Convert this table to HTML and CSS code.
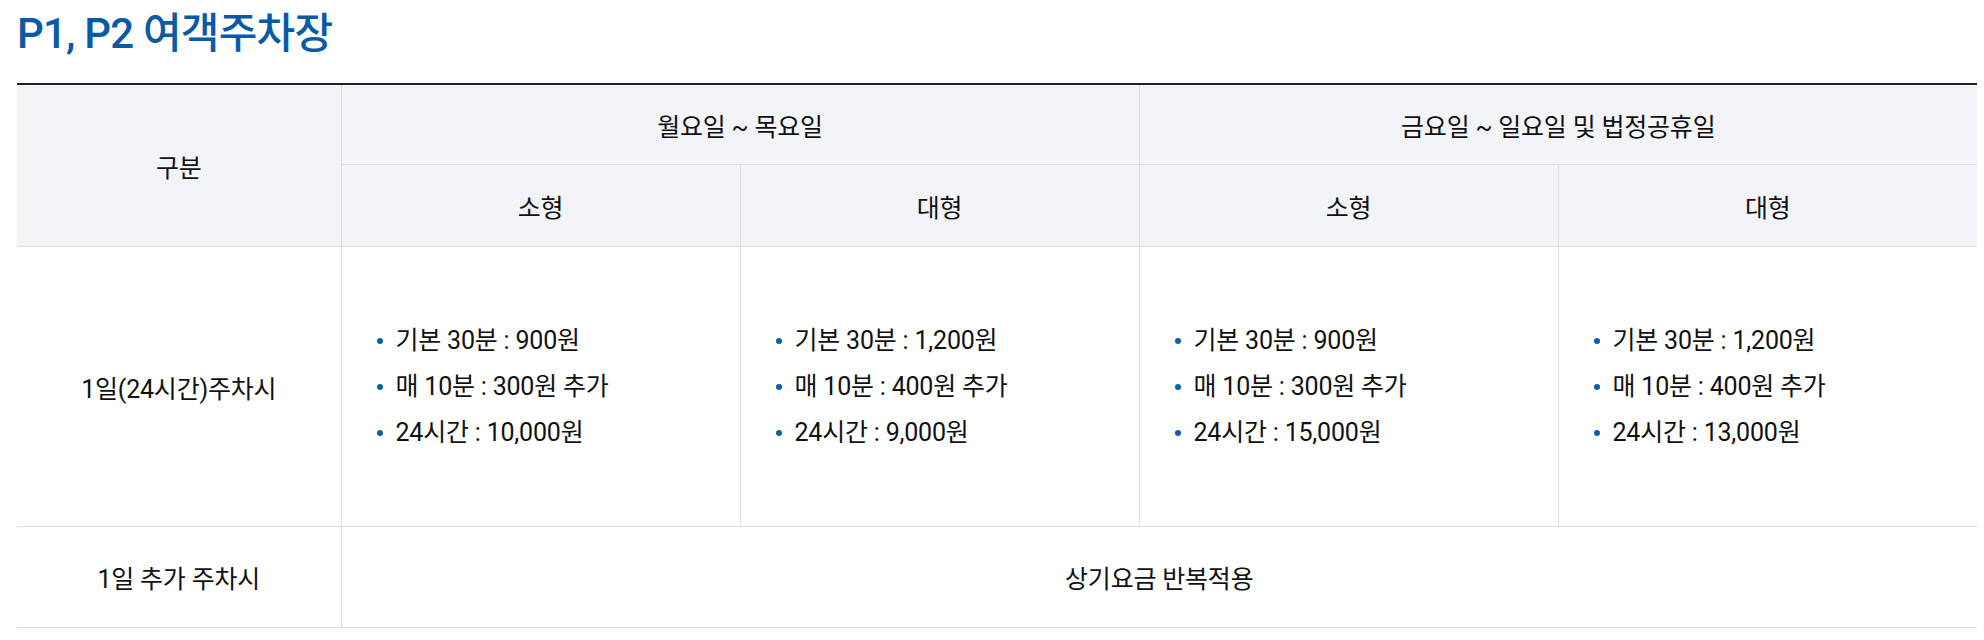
FILE: index.html
```html
<!DOCTYPE html>
<html lang="ko">
<head>
<meta charset="utf-8">
<title>P1, P2 여객주차장</title>
<link rel="stylesheet" href="styles.css">
</head>
<body>
<div class="page">
  <h2 class="title">P1, P2 여객주차장</h2>
  <table class="fee">
    <colgroup>
      <col class="c-label">
      <col class="c-week">
      <col class="c-week">
      <col class="c-end">
      <col class="c-end">
    </colgroup>
    <thead>
      <tr class="h1">
        <th rowspan="2">구분</th>
        <th colspan="2">월요일 ~ 목요일</th>
        <th colspan="2">금요일 ~ 일요일 및 법정공휴일</th>
      </tr>
      <tr class="h2">
        <th>소형</th>
        <th>대형</th>
        <th>소형</th>
        <th>대형</th>
      </tr>
    </thead>
    <tbody>
      <tr class="r-day">
        <td class="label">1일(24시간)주차시</td>
        <td><ul class="dots"><li>기본 30분 : 900원</li><li>매 10분 : 300원 추가</li><li>24시간 : 10,000원</li></ul></td>
        <td><ul class="dots"><li>기본 30분 : 1,200원</li><li>매 10분 : 400원 추가</li><li>24시간 : 9,000원</li></ul></td>
        <td><ul class="dots"><li>기본 30분 : 900원</li><li>매 10분 : 300원 추가</li><li>24시간 : 15,000원</li></ul></td>
        <td><ul class="dots"><li>기본 30분 : 1,200원</li><li>매 10분 : 400원 추가</li><li>24시간 : 13,000원</li></ul></td>
      </tr>
      <tr class="r-extra">
        <td class="label">1일 추가 주차시</td>
        <td colspan="4" class="center">상기요금 반복적용</td>
      </tr>
    </tbody>
  </table>
</div>
</body>
</html>
```
FILE: styles.css
```css
html, body {
  margin: 0;
  padding: 0;
  background: #fff;
}
body {
  font-family: Roboto, "Noto Sans CJK KR", sans-serif;
  color: #111;
}
.page {
  padding: 0 7px 0 17px;
}
.title {
  margin: 0;
  height: 83px;
  box-sizing: border-box;
  padding-top: 8px;
  font-size: 42px;
  line-height: 52px;
  font-weight: 500;
  color: #0b5aa5;
  letter-spacing: -0.8px;
}
.fee {
  width: 1960px;
  border-collapse: collapse;
  table-layout: fixed;
  border-top: 2px solid #222;
  font-size: 25px;
  letter-spacing: -0.2px;
}
.c-label { width: 324px; }
.c-week { width: 399px; }
.c-end { width: 419px; }
.fee th, .fee td {
  border: 1px solid #dddee2;
  padding: 0;
  text-align: center;
  vertical-align: middle;
}
.fee tr > :first-child { border-left: none; }
.fee tr > :last-child { border-right: none; }
.fee th {
  background: #f3f4f8;
  font-weight: 400;
}
.h1 th { height: 79px; }
.h1 th[rowspan] { height: auto; }
.h2 th { height: 81px; }
.r-day td { height: 279px; }
.r-extra td { height: 100px; }
.fee td { text-align: left; padding-left: 35px; }
.fee td.label, .fee td.center { text-align: center; padding-left: 0; }
.dots {
  list-style: none;
  margin: 0;
  padding: 0;
}
.dots li {
  position: relative;
  padding-left: 19px;
  line-height: 46px;
}
.dots li::before {
  content: "";
  position: absolute;
  left: 0;
  top: 20px;
  width: 6px;
  height: 6px;
  border-radius: 50%;
  background: #0b5fad;
}
```
